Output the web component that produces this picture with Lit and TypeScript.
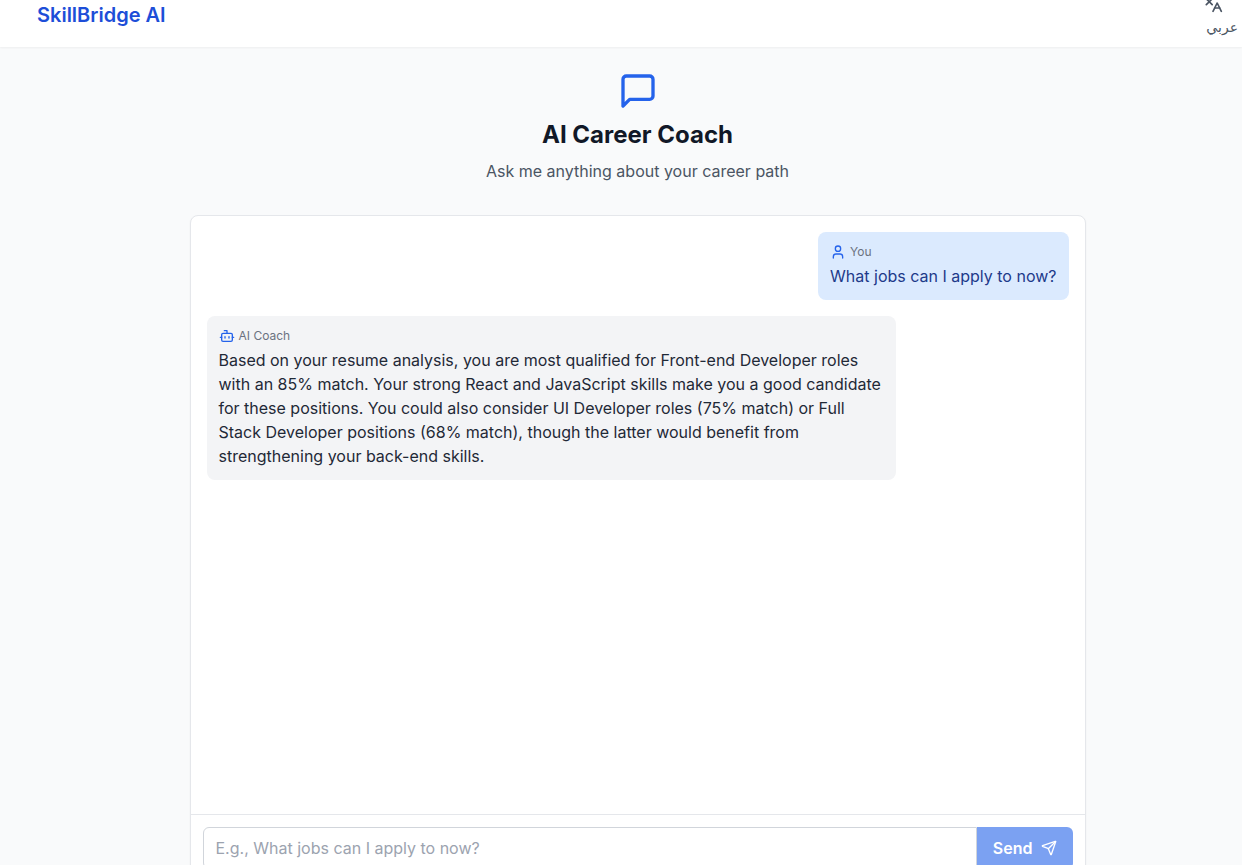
import { LitElement, html, svg, css } from "lit";
import { customElement, property, state } from "lit/decorators.js";

const icons = {
  languages: svg`<path d="m5 8 6 6"/><path d="m4 14 6-6 2-3"/><path d="M2 5h12"/><path d="M7 2h1"/><path d="m22 22-5-10-5 10"/><path d="M14 18h6"/>`,
  message: svg`<path d="M21 15a2 2 0 0 1-2 2H7l-4 4V5a2 2 0 0 1 2-2h14a2 2 0 0 1 2 2z"/>`,
  user: svg`<path d="M19 21v-2a4 4 0 0 0-4-4H9a4 4 0 0 0-4 4v2"/><circle cx="12" cy="7" r="4"/>`,
  bot: svg`<path d="M12 8V4H8"/><rect width="16" height="12" x="4" y="8" rx="2"/><path d="M2 14h2"/><path d="M20 14h2"/><path d="M15 13v2"/><path d="M9 13v2"/>`,
  send: svg`<path d="M14.536 21.686a.5.5 0 0 0 .937-.024l6.5-19a.496.496 0 0 0-.635-.635l-19 6.5a.5.5 0 0 0-.024.937l7.93 3.18a2 2 0 0 1 1.112 1.11z"/><path d="m21.854 2.147-10.94 10.939"/>`,
};

@customElement("line-icon")
class LineIcon extends LitElement {
  @property() name: keyof typeof icons = "message";

  static styles = css`
    :host {
      display: block;
      flex: none;
      width: 16px;
      height: 16px;
    }
    .glyph {
      display: block;
      width: 100%;
      height: 100%;
      fill: none;
      stroke: currentColor;
      stroke-width: 2;
      stroke-linecap: round;
      stroke-linejoin: round;
    }
  `;

  render() {
    return html`<svg class="glyph" viewBox="0 0 24 24" aria-hidden="true">${icons[this.name]}</svg>`;
  }
}

@customElement("chat-message")
class ChatMessage extends LitElement {
  @property() sender = "ai";
  @property() text = "";

  static styles = css`
    :host {
      display: flex;
    }
    .bubble {
      box-sizing: border-box;
      max-width: 80%;
      padding: 12px;
      border-radius: 8px;
      line-height: 24px;
    }
    .user {
      margin-left: auto;
      background: #dbeafe;
      color: #1e3a8a;
    }
    .ai {
      background: #f3f4f6;
      color: #1f2937;
    }
    .author {
      display: flex;
      align-items: center;
      gap: 4px;
      margin-bottom: 4px;
      font-size: 12px;
      line-height: 16px;
      color: #6b7280;
    }
    .icon {
      color: #2563eb;
    }
    .text {
      margin: 0;
    }
  `;

  render() {
    const mine = this.sender === "user";
    return html`<div class="bubble ${mine ? "user" : "ai"}">
      <div class="author">
        <line-icon class="icon" name=${mine ? "user" : "bot"}></line-icon>
        <span>${mine ? "You" : "AI Coach"}</span>
      </div>
      <p class="text">${this.text}</p>
    </div>`;
  }
}

@customElement("app-root")
class AppRoot extends LitElement {
  @state() draft = "";
  @state() messages = [
    { sender: "user", text: "What jobs can I apply to now?" },
    {
      sender: "ai",
      text: "Based on your resume analysis, you are most qualified for Front-end Developer roles with an 85% match. Your strong React and JavaScript skills make you a good candidate for these positions. You could also consider UI Developer roles (75% match) or Full Stack Developer positions (68% match), though the latter would benefit from strengthening your back-end skills.",
    },
  ];

  static styles = css`
    :host {
      display: block;
      height: 100vh;
      overflow: hidden;
      background: #f9fafb;
      color: #111827;
      font-family: Inter, "DejaVu Sans", sans-serif;
      font-size: 16px;
      line-height: 24px;
    }
    .header {
      display: flex;
      align-items: flex-end;
      height: 47px;
      overflow: hidden;
      background: #fff;
    }
    .shade {
      box-shadow: 0 1px 2px rgba(0, 0, 0, 0.05);
    }
    .bar {
      display: flex;
      flex: 1;
      align-items: center;
      justify-content: space-between;
      height: 64px;
      padding: 0 4px 0 37px;
    }
    .brand {
      color: #1d4ed8;
      font-size: 20px;
      line-height: 28px;
      font-weight: 600;
      text-decoration: none;
    }
    .lang {
      display: flex;
      flex-direction: column;
      gap: 4px;
      width: 35px;
      padding: 0;
      border: 0;
      background: none;
      color: #4b5563;
      font: inherit;
      font-size: 14px;
      line-height: 20px;
      font-weight: 500;
      cursor: pointer;
    }
    .lang-icon {
      width: 20px;
      height: 20px;
    }
    .lang-name {
      align-self: flex-end;
    }
    .main {
      padding: 24px 0 24px 33px;
    }
    .hero {
      display: flex;
      flex-direction: column;
      align-items: center;
      gap: 8px;
      margin-bottom: 32px;
      text-align: center;
    }
    .hero-icon {
      width: 40px;
      height: 40px;
      color: #2563eb;
    }
    .title {
      margin: 0;
      font-size: 24px;
      line-height: 32px;
      font-weight: 700;
    }
    .subtitle {
      margin: 0;
      color: #4b5563;
    }
    .card {
      box-sizing: border-box;
      max-width: 896px;
      margin: 0 auto;
      border: 1px solid #e5e7eb;
      border-radius: 8px;
      background: #fff;
      box-shadow: 0 1px 2px rgba(0, 0, 0, 0.05);
    }
    .log {
      display: flex;
      flex-direction: column;
      gap: 16px;
      box-sizing: border-box;
      height: 598px;
      padding: 16px;
      overflow-y: auto;
    }
    .composer {
      display: flex;
      padding: 12px;
      border-top: 1px solid #e5e7eb;
    }
    .field {
      flex: 1;
      min-width: 0;
      box-sizing: border-box;
      height: 42px;
      padding: 8px 12px;
      border: 1px solid #d1d5db;
      border-radius: 6px 0 0 6px;
      background: #fff;
      color: inherit;
      font: inherit;
    }
    .field::placeholder {
      color: #9ca3af;
      opacity: 1;
    }
    .send {
      display: flex;
      align-items: center;
      gap: 8px;
      padding: 8px 16px;
      border: 0;
      border-radius: 0 6px 6px 0;
      background: #2563eb;
      color: #fff;
      font: inherit;
      font-weight: 600;
    }
    .send:disabled {
      opacity: 0.6;
    }
  `;

  private submit(e: Event) {
    e.preventDefault();
    const text = this.draft.trim();
    if (!text) return;
    this.messages = [...this.messages, { sender: "user", text }];
    this.draft = "";
  }

  render() {
    return html`
      <div class="shade">
        <header class="header">
          <div class="bar">
            <a class="brand" href="#">SkillBridge AI</a>
            <button class="lang" type="button">
              <line-icon class="lang-icon" name="languages"></line-icon>
              <span class="lang-name" lang="ar" dir="rtl">عربي</span>
            </button>
          </div>
        </header>
      </div>
      <main class="main">
        <div class="hero">
          <line-icon class="hero-icon" name="message"></line-icon>
          <h1 class="title">AI Career Coach</h1>
          <p class="subtitle">Ask me anything about your career path</p>
        </div>
        <section class="card">
          <div class="log">
            ${this.messages.map(
              (m) => html`<chat-message .sender=${m.sender} .text=${m.text}></chat-message>`
            )}
          </div>
          <form class="composer" @submit=${this.submit}>
            <input
              class="field"
              type="text"
              aria-label="Your question"
              placeholder="E.g., What jobs can I apply to now?"
              .value=${this.draft}
              @input=${(e: Event) => (this.draft = (e.target as HTMLInputElement).value)}
            />
            <button class="send" type="submit" ?disabled=${!this.draft.trim()}>
              <span>Send</span>
              <line-icon name="send"></line-icon>
            </button>
          </form>
        </section>
      </main>
    `;
  }
}
